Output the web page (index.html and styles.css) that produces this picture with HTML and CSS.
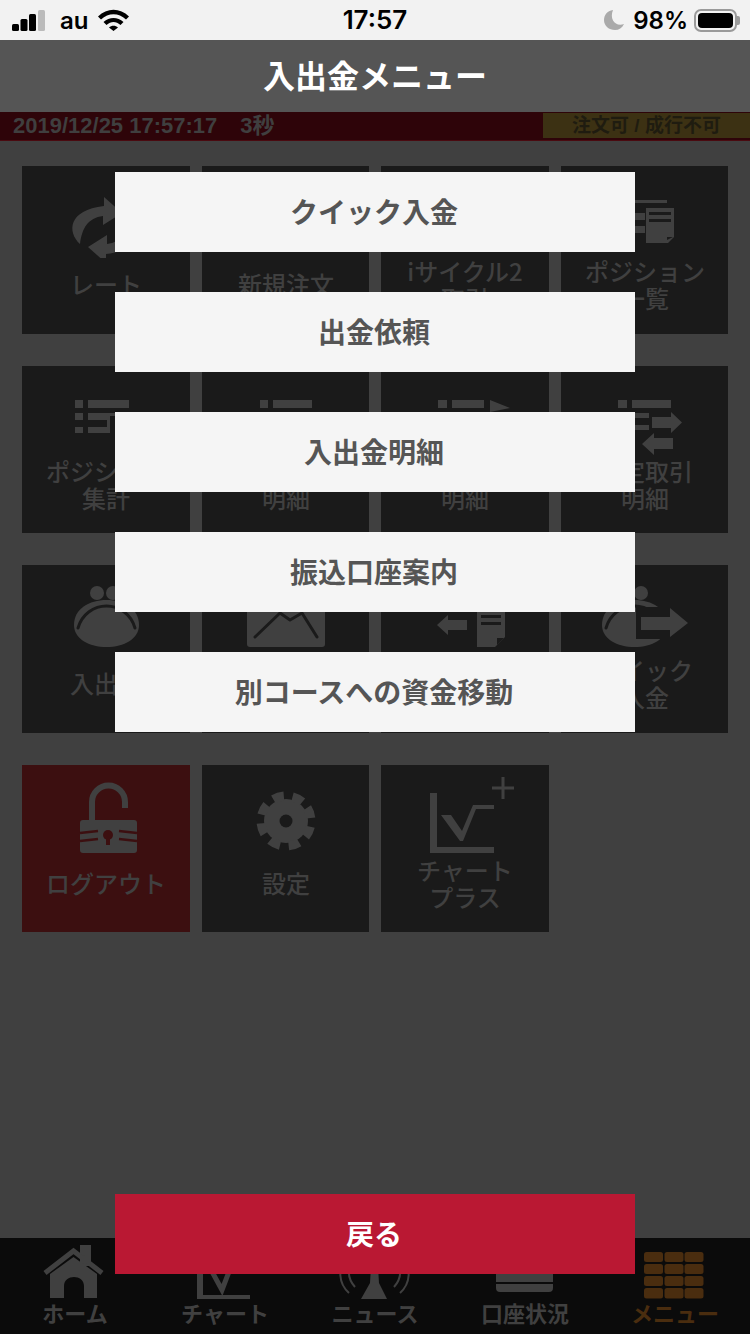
FILE: index.html
```html
<!DOCTYPE html>
<html lang="ja">
<head>
<meta charset="utf-8">
<title>入出金メニュー</title>
<link rel="stylesheet" href="styles.css">
</head>
<body>
<div class="screen">
  <div class="status">
    <div class="status-left">
      <svg class="signal" width="34" height="22" viewBox="0 0 34 22"><rect x="0" y="14" width="7" height="7" rx="1.5" fill="#000"/><rect x="8.5" y="9" width="7" height="12" rx="1.5" fill="#000"/><rect x="17" y="4" width="7" height="17" rx="1.5" fill="#000"/><rect x="26" y="0" width="7" height="21" rx="1.5" fill="#bbb"/></svg>
      <span class="carrier">au</span>
      <svg class="wifi" width="31" height="22" viewBox="0 0 31 22"><path d="M0 7.5 C9 -1.5 22 -1.5 31 7.5 L28 10.5 C20.5 3.5 10.5 3.5 3 10.5 Z M5.5 13 C11.5 7.5 19.5 7.5 25.5 13 L22.5 16 C18 12 13 12 8.5 16 Z M11 18.5 C13.5 16 17.500 16 20 18.500 L15.500 22 Z" fill="#000"/></svg>
    </div>
    <div class="clock">17:57</div>
    <div class="status-right">
      <svg width="20" height="20" viewBox="0 0 20 20"><path d="M9 0 C3 1 0 5 0 10 C0 16 5 20 11 20 C15 20 18 18 20 14 C12 17 5 10 9 0 Z" fill="#aaa"/></svg>
      <span class="pct">98%</span>
      <div class="battery"><div class="battery-fill"></div></div>
    </div>
  </div>

  <header class="title">入出金メニュー</header>

  <div class="ticker">
    <div class="ticker-time">2019/12/25 17:57:17<span class="ticker-sec">3秒</span></div>
    <div class="ticker-state">注文可 / 成行不可</div>
  </div>

  <main class="content">
    <div class="grid">
      <div class="tile">
        <svg class="tile-icon" viewBox="0 0 168 92"><g id="rate"><path d="M58 78 C45 66 46 44 82 40 L82 31 L100 47 L81 59 L81 50 C66 52 60 62 58 78 Z"/><path transform="rotate(180 83 64)" d="M58 78 C45 66 46 44 82 40 L82 31 L100 47 L81 59 L81 50 C66 52 60 62 58 78 Z"/></g></svg>
        <div class="tile-label">レート</div>
      </div>
      <div class="tile">
        <svg class="tile-icon" viewBox="0 0 168 92"><path d="M56 30 H112 V80 H56 Z"/></svg>
        <div class="tile-label">新規注文</div>
      </div>
      <div class="tile">
        <svg class="tile-icon" viewBox="0 0 168 92"><circle cx="84" cy="52" r="26"/></svg>
        <div class="tile-label">iサイクル2<br>取引</div>
      </div>
      <div class="tile">
        <svg class="tile-icon" viewBox="0 0 168 92"><path d="M57 34 H106 V37 H57 Z M66 47 H84 V54 H66 Z M66 60 H84 V67 H66 Z"/><path d="M85 42 H113 V71 L107 77 H85 Z"/><path class="cut" d="M88 46 H110 V49 H88 Z M88 53 H110 V56 H88 Z M106 74 L112 71 H106 Z"/></svg>
        <div class="tile-label">ポジション<br>一覧</div>
      </div>

      <div class="tile">
        <svg class="tile-icon" viewBox="0 0 168 92"><path d="M53 34 H61 V42 H53 Z M66 34 H107 V42 H66 Z M53 47 H61 V54 H53 Z M66 47 H85 V54 H66 Z M53 61 H61 V67 H53 Z M66 61 H85 V67 H66 Z"/><path d="M85 47 H93 V50 H88 V67 H85 Z"/></svg>
        <div class="tile-label">ポジション<br>集計</div>
      </div>
      <div class="tile">
        <svg class="tile-icon" viewBox="0 0 168 92"><path d="M58 34 H66 V42 H58 Z M71 34 H110 V42 H71 Z"/></svg>
        <div class="tile-label">注文<br>明細</div>
      </div>
      <div class="tile">
        <svg class="tile-icon" viewBox="0 0 168 92"><path d="M57 34 H66 V42 H57 Z M71 34 H103 V42 H71 Z M109 34 L129 42 L109 46 Z"/></svg>
        <div class="tile-label">約定<br>明細</div>
      </div>
      <div class="tile">
        <svg class="tile-icon" viewBox="0 0 168 92"><path d="M57 34 H66 V42 H57 Z M71 34 H110 V42 H71 Z M71 47 H88 V52 H71 Z M71 59 H88 V64 H71 Z"/><path d="M91 51 H110 V46 L121 56.500 L110 67 V62 H91 Z M112 72 H93 V67 L81 78 L93 89 V83 H112 Z"/></svg>
        <div class="tile-label">確定取引<br>明細</div>
      </div>

      <div class="tile">
        <svg class="tile-icon" viewBox="0 0 168 92"><circle cx="75" cy="28" r="7"/><circle cx="91" cy="28" r="7"/><path d="M52 60 C52 44 67 35 84.500 35 C102 35 117 44 117 60 C117 74 102 82 84.500 82 C67 82 52 74 52 60 Z"/><path class="cut-line" d="M56 63 C60 49 72 41 84.500 41 C97 41 109 49 113 63"/></svg>
        <div class="tile-label">入出金</div>
      </div>
      <div class="tile">
        <svg class="tile-icon" viewBox="0 0 168 92"><rect x="45" y="20" width="78" height="62" rx="3"/><path class="cut-line" d="M53 72 L78 48 L88 55 L100 48 L115 72"/></svg>
        <div class="tile-label">通知</div>
      </div>
      <div class="tile">
        <svg class="tile-icon" viewBox="0 0 168 92"><path d="M56 60 L67 50 V55 H86 V65 H67 V70 Z M96 40 H124 V72 L114 82 H96 Z"/><path class="cut" d="M100 50 H120 V53 H100 Z M100 57 H120 V60 H100 Z M116 80 L123 73 H116 Z"/></svg>
        <div class="tile-label">報告書</div>
      </div>
      <div class="tile">
        <svg class="tile-icon" viewBox="0 0 168 92"><g transform="translate(-11 0)"><circle cx="75" cy="28" r="7"/><circle cx="91" cy="28" r="7"/><path d="M52 60 C52 44 67 35 84.500 35 C102 35 117 44 117 60 C117 74 102 82 84.500 82 C67 82 52 74 52 60 Z"/><path class="cut-line" d="M56 63 C60 49 72 41 84.500 41 C97 41 109 49 113 63"/></g><path class="cut" d="M75 42 H112 V74 H75 Z"/><path d="M80 52 H109 V43 L127 58 L109 72 V65 H80 Z"/></svg>
        <div class="tile-label">クイック<br>入金</div>
      </div>

      <div class="tile tile-logout">
        <svg class="tile-icon" viewBox="0 0 168 92"><path class="shackle" d="M70 56 V37 A16.500 16.500 0 0 1 103 37 V43"/><rect x="58" y="55" width="57" height="33" rx="3"/><path class="band" d="M58 68 L76 66 M58 76 L76 74 M97 66 L115 68 M97 74 L115 76"/><circle class="hole" cx="86" cy="70" r="5"/><rect class="hole" x="84" y="70" width="4" height="10"/></svg>
        <div class="tile-label">ログアウト</div>
      </div>
      <div class="tile">
        <svg class="tile-icon" viewBox="0 0 168 92"><circle cx="84" cy="56" r="22"/><circle class="teeth" cx="84" cy="56" r="25" transform="rotate(-32 84 56)"/><circle class="cut" cx="84" cy="56" r="6.500"/></svg>
        <div class="tile-label">設定</div>
      </div>
      <div class="tile">
        <svg class="tile-icon" viewBox="0 0 168 92"><path d="M49 28 H56 V82 H113 V88 H49 Z"/><path d="M60 50 H70 L81 66 L92 40 H113 V44 H95 L82 76 H79 Z"/><path class="thin" d="M122 12 V34 M111 23 H133"/></svg>
        <div class="tile-label">チャート<br>プラス</div>
      </div>
    </div>
  </main>

  <nav class="tabs">
    <div class="tab">
      <svg class="tab-icon" viewBox="0 0 150 64"><path d="M80 7 H91 V28 H80 Z"/><path class="roof" d="M45 35 L73.500 13 L102 35"/><path d="M50 36 L73.500 19 L97 36 V60 H84 V48 C84 36 64 36 64 48 V60 H50 Z"/></svg>
      <div class="tab-label">ホーム</div>
    </div>
    <div class="tab">
      <svg class="tab-icon" viewBox="0 0 150 64"><path d="M47 12 H53 V57 H100 V61 H47 Z"/><path class="roof" d="M60 30 L72 52 L85 18 H100"/></svg>
      <div class="tab-label">チャート</div>
    </div>
    <div class="tab">
      <svg class="tab-icon" viewBox="0 0 150 64"><path d="M72 12 H77 L79 45 L87 61 H61 L70 45 Z"/><path class="arc" d="M46 20 C38 30 38 45 49 55 M103 20 C111 30 111 45 100 55 M54 22 C47 30 47 40 55 49 M95 22 C102 30 102 40 94 49"/></svg>
      <div class="tab-label">ニュース</div>
    </div>
    <div class="tab">
      <svg class="tab-icon" viewBox="0 0 150 64"><path d="M46 12 H103 V44 H46 Z M46 46 H103 V50 Q103 54 99 54 H50 Q46 54 46 50 Z"/></svg>
      <div class="tab-label">口座状況</div>
    </div>
    <div class="tab tab-active">
      <svg class="tab-icon" viewBox="0 0 150 64"><rect x="44" y="14" width="19" height="10" rx="2.500"/><rect x="64.500" y="14" width="19" height="10" rx="2.500"/><rect x="84.500" y="14" width="19" height="10" rx="2.500"/><rect x="44" y="26" width="19" height="10" rx="2.500"/><rect x="64.500" y="26" width="19" height="10" rx="2.500"/><rect x="84.500" y="26" width="19" height="10" rx="2.500"/><rect x="44" y="38" width="19" height="10" rx="2.500"/><rect x="64.500" y="38" width="19" height="10" rx="2.500"/><rect x="84.500" y="38" width="19" height="10" rx="2.500"/><rect x="44" y="50" width="19" height="10.500" rx="2.500"/><rect x="64.500" y="50" width="19" height="10.500" rx="2.500"/><rect x="84.500" y="50" width="19" height="10.500" rx="2.500"/></svg>
      <div class="tab-label">メニュー</div>
    </div>
  </nav>

  <div class="modal">
    <button class="modal-btn">クイック入金</button>
    <button class="modal-btn">出金依頼</button>
    <button class="modal-btn">入出金明細</button>
    <button class="modal-btn">振込口座案内</button>
    <button class="modal-btn">別コースへの資金移動</button>
    <button class="modal-btn modal-back">戻る</button>
  </div>
</div>
</body>
</html>
```
FILE: styles.css
```css
* { box-sizing: border-box; }
html, body { margin: 0; padding: 0; }
body {
  width: 750px;
  height: 1334px;
  overflow: hidden;
  font-family: "Noto Sans CJK JP", "Liberation Sans", sans-serif;
}
.screen {
  position: relative;
  width: 750px;
  height: 1334px;
  display: flex;
  flex-direction: column;
  background: #404040;
}

/* status bar */
.status {
  height: 40px;
  flex: none;
  background: #f2f2f2;
  display: grid;
  grid-template-columns: 1fr auto 1fr;
  align-items: center;
  color: #000;
  font-family: Inter, "Liberation Sans", sans-serif;
  font-weight: 600;
  font-size: 24px;
}
.status-left { display: flex; align-items: center; padding-left: 12px; }
.signal { margin-right: 14px; margin-top: 1px; }
.carrier { margin-right: 10px; }
.wifi { margin-top: -1px; }
.clock { font-size: 26px; line-height: 36px; }
.status-right { display: flex; align-items: center; justify-content: flex-end; padding-right: 13px; }
.pct { margin-left: 9px; margin-right: 6px; }
.battery {
  position: relative;
  width: 43px;
  height: 23px;
  border: 2px solid #9a9a9a;
  border-radius: 7px;
  padding: 2px;
}
.battery::after {
  content: "";
  position: absolute;
  right: -5px;
  top: 5px;
  width: 3px;
  height: 9px;
  border-radius: 0 2px 2px 0;
  background: #9a9a9a;
}
.battery-fill { width: 100%; height: 100%; background: #000; border-radius: 4px; }

/* header */
.title {
  height: 72px;
  flex: none;
  background: #555;
  color: #fff;
  font-size: 32px;
  font-weight: 700;
  display: flex;
  align-items: center;
  justify-content: center;
  padding-bottom: 4px;
}

/* ticker */
.ticker {
  height: 29px;
  flex: none;
  display: flex;
  justify-content: space-between;
  background: #2e0409;
  padding: 1px 0 2px;
  border-bottom: 1px solid #4a0a10;
  font-size: 22px;
  font-weight: 700;
  line-height: 26px;
}
.ticker-time {
  padding-left: 13px;
  color: #3f3f3f;
  font-family: "Liberation Sans", "Noto Sans CJK JP", sans-serif;
}
.ticker-sec { margin-left: 23px; }
.ticker-state {
  width: 207px;
  background: #3c3113;
  color: #1f1c10;
  text-align: center;
  font-size: 19px;
  font-family: "Liberation Sans", "Noto Sans CJK JP", sans-serif;
}

/* tile grid */
.content { flex: 1; padding: 25px 0 0 22px; }
.grid {
  display: grid;
  grid-template-columns: 168px 167px 168px 167px;
  grid-template-rows: 168px 167px 168px 167px;
  column-gap: 12px;
  row-gap: 32px;
}
.tile {
  background: #1a1a1a;
  display: grid;
  grid-template-rows: 92px 54px;
  justify-items: center;
  overflow: hidden;
}
.tile-logout { background: #3c0f10; }
.tile-icon { width: 168px; height: 92px; fill: #404040; display: block; }
.tile-label {
  align-self: center;
  text-align: center;
  color: #404040;
  font-size: 24px;
  line-height: 27px;
  font-weight: 500;
  padding-bottom: 3px;
}
.cut { fill: #1a1a1a; }
.cut-line { fill: none; stroke: #1a1a1a; stroke-width: 3; stroke-linecap: round; stroke-linejoin: round; }
.shackle { fill: none; stroke: #404040; stroke-width: 6; }
.band { fill: none; stroke: #3c0f10; stroke-width: 2.500; }
.hole { fill: #3c0f10; }
.teeth { fill: none; stroke: #404040; stroke-width: 9; stroke-dasharray: 11 8.635; }
.thin { fill: none; stroke: #404040; stroke-width: 3; }

/* tab bar */
.tabs {
  height: 96px;
  flex: none;
  background: #0b0b0b;
  display: grid;
  grid-template-columns: repeat(5, 150px);
}
.tab { display: grid; grid-template-rows: 60px 36px; justify-items: center; }
.tab-icon { width: 150px; height: 64px; fill: #404040; display: block; }
.tab-label {
  color: #404040;
  font-size: 22px;
  font-weight: 700;
  line-height: 28px;
  text-align: center;
}
.tab-active .tab-icon { fill: #4a2d0f; }
.tab-active .tab-label { color: #4a2d0f; }
.roof { fill: none; stroke: #404040; stroke-width: 5; }
.arc { fill: none; stroke: #404040; stroke-width: 2; }

/* modal */
.modal {
  position: absolute;
  inset: 0;
  display: flex;
  flex-direction: column;
  align-items: center;
  gap: 40px;
  padding: 172px 0 60px;
}
.modal-btn {
  width: 520px;
  height: 80px;
  flex: none;
  border: 0;
  padding: 0 2px 3px 0;
  background: #f5f5f5;
  color: #555;
  font-family: inherit;
  font-size: 28px;
  font-weight: 700;
}
.modal-back {
  margin-top: auto;
  background: #ba1833;
  color: #fff;
}
```
